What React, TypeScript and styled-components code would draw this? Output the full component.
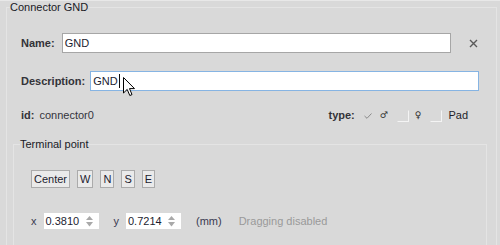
import styled, { createGlobalStyle } from "styled-components";

const GlobalStyle = createGlobalStyle`
  html, body {
    margin: 0;
    background: #d9d9d9;
  }
  body {
    font-family: "Liberation Sans", Arial, sans-serif;
    font-size: 11px;
    color: #1e1e2a;
  }
`;

const Window = styled.div`
  height: 245px;
  overflow: hidden;
  border-top: 1px solid #e8e8e8;
  box-sizing: border-box;
`;

const Group = styled.fieldset<{ $inner?: boolean }>`
  box-sizing: border-box;
  margin: ${(p) => (p.$inner ? "16px 0 0 0" : "0 0 0 6px")};
  width: ${(p) => (p.$inner ? "auto" : "491px")};
  min-height: ${(p) => (p.$inner ? "140px" : "280px")};
  padding: ${(p) => (p.$inner ? "0 0 0 17px" : "0 9px 0 6px")};
  border: 1px solid #e4e4e4;
`;

const Legend = styled.legend<{ $offset: number }>`
  margin-left: ${(p) => p.$offset}px;
  padding: 0;
  line-height: 13px;
  color: #1a1a26;
`;

const Rows = styled.div`
  padding: 19px 8px 0 8px;
  display: flex;
  flex-direction: column;
`;

const FieldRow = styled.div<{ $gap: number; $top?: number }>`
  display: flex;
  align-items: center;
  gap: ${(p) => p.$gap}px;
  margin-top: ${(p) => p.$top ?? 0}px;
`;

const Label = styled.span`
  font-weight: bold;
  color: #333338;
`;

const Field = styled.div<{ $focus?: boolean }>`
  position: relative;
  flex: 1;
  height: 20px;
  box-sizing: border-box;
  background: #fff;
  border: 1px solid ${(p) => (p.$focus ? "#86b4e3" : "#a6a6a6")};
  display: flex;
  align-items: center;
  padding-left: 2px;
  color: #1c1c30;
`;

const Caret = styled.span`
  display: inline-block;
  width: 1px;
  height: 14px;
  background: #111;
  margin-left: 1px;
`;

const Pointer = styled.svg`
  position: absolute;
  left: 32px;
  top: 5px;
`;

const CloseBtn = styled.button`
  border: 0;
  background: none;
  padding: 0;
  margin: 0 1px 0 10px;
  width: 10px;
  height: 10px;
  display: flex;
  align-items: center;
  justify-content: center;
`;

const MetaRow = styled.div`
  display: flex;
  justify-content: space-between;
  align-items: center;
  margin-top: 18px;
  line-height: 13px;
`;

const Value = styled.span`
  color: #34343c;
  margin-left: 5px;
`;

const TypeGroup = styled.div`
  display: flex;
  align-items: center;
  gap: 6px;
  margin-right: 11px;
`;

const Option = styled.label`
  display: flex;
  align-items: center;
  gap: 6px;
  margin-left: 3px;
  &:first-of-type {
    margin-left: 1px;
  }
`;

const Box = styled.span<{ $checked?: boolean }>`
  width: 12px;
  height: 12px;
  box-sizing: border-box;
  border: 1px solid;
  border-color: ${(p) =>
    p.$checked ? "transparent" : "transparent #f4f4f4 #f4f4f4 transparent"};
  display: flex;
  align-items: center;
  justify-content: center;
`;

const Symbol = styled.span`
  font-family: "DejaVu Sans", sans-serif;
  font-size: 9px;
  color: #2a2a2a;
`;

const ButtonRow = styled.div`
  display: flex;
  gap: 7px;
  padding-top: 19px;
`;

const DirButton = styled.button`
  font: inherit;
  color: #1c1c30;
  height: 18px;
  line-height: 16px;
  padding: 0 2px;
  margin: 0;
  background: #eaeaea;
  border: 1px solid #ababab;
  border-radius: 0;
`;

const SpinRow = styled.div`
  display: flex;
  align-items: center;
  margin-top: 25px;
  height: 16px;
`;

const AxisLabel = styled.span<{ $first?: boolean }>`
  margin-left: ${(p) => (p.$first ? 0 : 15)}px;
  margin-right: 7px;
  color: #3a3a50;
`;

const SpinBox = styled.div`
  width: 55px;
  height: 16px;
  box-sizing: border-box;
  background: #fff;
  display: flex;
  align-items: center;
  justify-content: space-between;
  padding: 0 6px 0 2px;
  color: #1c1c30;
`;

const Unit = styled.span`
  margin-left: 15px;
  color: #3a3a50;
`;

const Hint = styled.span`
  margin-left: 17px;
  color: #9a9a9a;
`;

const SpinArrows = () => (
  <svg width="7" height="11" viewBox="0 0 7 11">
    <path d="M3.5 0 L7 4 L0 4 Z" fill="#a9a9a9" />
    <path d="M0 6 L7 6 L3.5 10.5 Z" fill="#a9a9a9" />
  </svg>
);

const directions = ["Center", "W", "N", "S", "E"];

const App = () => {
  return (
    <>
      <GlobalStyle />
      <Window>
        <Group>
          <Legend $offset={-3}>Connector GND</Legend>
          <Rows>
            <FieldRow $gap={7}>
              <Label>Name:</Label>
              <Field>GND</Field>
              <CloseBtn aria-label="close">
                <svg width="9" height="9" viewBox="0 0 9 9">
                  <path d="M1 1 L8 8 M8 1 L1 8" stroke="#5a5a5a" strokeWidth="1.4" />
                </svg>
              </CloseBtn>
            </FieldRow>
            <FieldRow $gap={5} $top={18}>
              <Label>Description:</Label>
              <Field $focus>
                GND
                <Caret />
                <Pointer width="13" height="20" viewBox="0 0 13 20">
                  <path
                    d="M0.5 0.5 L0.5 16 L4.2 12.4 L6.8 18.5 L9 17.6 L6.5 11.6 L11.5 11.6 Z"
                    fill="#fff"
                    stroke="#000"
                    strokeWidth="1"
                    strokeLinejoin="round"
                  />
                </Pointer>
              </Field>
            </FieldRow>
            <MetaRow>
              <div>
                <Label>id:</Label>
                <Value>connector0</Value>
              </div>
              <TypeGroup>
                <Label>type:</Label>
                <Option>
                  <Box $checked>
                    <svg width="8" height="6" viewBox="0 0 8 6">
                      <path d="M0.5 3 L3 5.3 L7.5 0.5" stroke="#8a8a8a" strokeWidth="1" fill="none" />
                    </svg>
                  </Box>
                  <Symbol>♂</Symbol>
                </Option>
                <Option>
                  <Box />
                  <Symbol>♀</Symbol>
                </Option>
                <Option>
                  <Box />
                  <span>Pad</span>
                </Option>
              </TypeGroup>
            </MetaRow>
          </Rows>
          <Group $inner>
            <Legend $offset={-11}>Terminal point</Legend>
            <ButtonRow>
              {directions.map((d) => (
                <DirButton key={d}>{d}</DirButton>
              ))}
            </ButtonRow>
            <SpinRow>
              <AxisLabel $first>x</AxisLabel>
              <SpinBox>
                0.3810
                <SpinArrows />
              </SpinBox>
              <AxisLabel>y</AxisLabel>
              <SpinBox>
                0.7214
                <SpinArrows />
              </SpinBox>
              <Unit>(mm)</Unit>
              <Hint>Dragging disabled</Hint>
            </SpinRow>
          </Group>
        </Group>
      </Window>
    </>
  );
};

export default App;
